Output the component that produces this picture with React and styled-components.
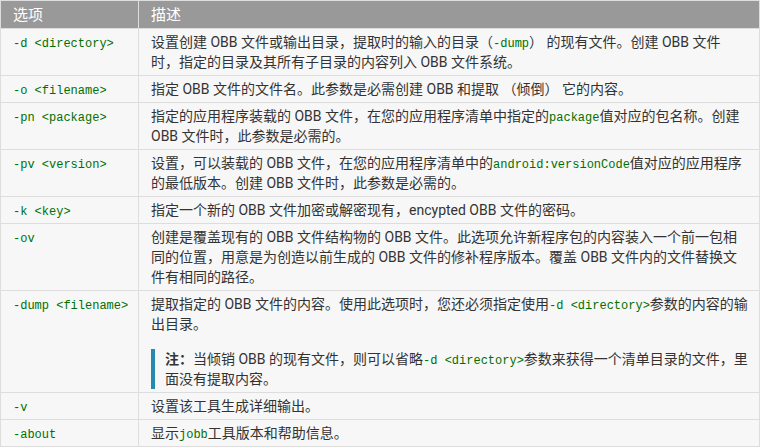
import React from 'react';
import styled, { createGlobalStyle } from 'styled-components';

const GlobalStyle = createGlobalStyle`
  html, body {
    margin: 0;
    padding: 0;
    background: #fff;
  }
  body {
    font-family: Roboto, "Noto Sans CJK SC", sans-serif;
  }
`;

const Table = styled.table`
  width: 760px;
  border-collapse: collapse;
  table-layout: fixed;
  font-size: 14px;
  color: #333;
`;

const HeadCell = styled.th`
  box-sizing: border-box;
  background: #999;
  color: #fff;
  font-weight: normal;
  font-size: 15px;
  text-align: left;
  line-height: 20px;
  padding: 4px 12px 3px;
  border: 1px solid #ddd;
  width: ${(p) => p.width || 'auto'};
`;

const Cell = styled.td`
  background: #f7f7f7;
  vertical-align: top;
  line-height: 20px;
  padding: 3px 12px 3px;
  border: 1px solid #ddd;
  white-space: nowrap;
`;

const Code = styled.code`
  font-family: "Liberation Mono", monospace;
  font-size: 12px;
  line-height: 1;
  color: #007000;
`;

const Note = styled.div`
  margin-top: 15px;
  border-left: 4px solid #258aaf;
  padding-left: 10px;
  line-height: 20px;
`;

const NoteLabel = styled.strong`
  font-weight: bold;
`;

const rows = [
  {
    opt: '-d <directory>',
    desc: (
      <>
        设置创建 OBB 文件或输出目录，提取时的输入的目录（<Code>-dump</Code>） 的现有文件。创建 OBB 文件
        <br />
        时，指定的目录及其所有子目录的内容列入 OBB 文件系统。
      </>
    ),
  },
  { opt: '-o <filename>', desc: '指定 OBB 文件的文件名。此参数是必需创建 OBB 和提取 （倾倒） 它的内容。' },
  {
    opt: '-pn <package>',
    desc: (
      <>
        指定的应用程序装载的 OBB 文件，在您的应用程序清单中指定的<Code>package</Code>值对应的包名称。创建
        <br />
        OBB 文件时，此参数是必需的。
      </>
    ),
  },
  {
    opt: '-pv <version>',
    desc: (
      <>
        设置，可以装载的 OBB 文件，在您的应用程序清单中的<Code>android:versionCode</Code>值对应的应用程序
        <br />
        的最低版本。创建 OBB 文件时，此参数是必需的。
      </>
    ),
  },
  { opt: '-k <key>', desc: '指定一个新的 OBB 文件加密或解密现有，encypted OBB 文件的密码。' },
  {
    opt: '-ov',
    desc: (
      <>
        创建是覆盖现有的 OBB 文件结构物的 OBB 文件。此选项允许新程序包的内容装入一个前一包相
        <br />
        同的位置，用意是为创造以前生成的 OBB 文件的修补程序版本。覆盖 OBB 文件内的文件替换文
        <br />
        件有相同的路径。
      </>
    ),
  },
  {
    opt: '-dump <filename>',
    desc: (
      <>
        提取指定的 OBB 文件的内容。使用此选项时，您还必须指定使用<Code>-d &lt;directory&gt;</Code>参数的内容的输
        <br />
        出目录。
        <Note>
          <NoteLabel>注：</NoteLabel>当倾销 OBB 的现有文件，则可以省略<Code>-d &lt;directory&gt;</Code>参数来获得一个清单目录的文件，里
          <br />
          面没有提取内容。
        </Note>
      </>
    ),
  },
  { opt: '-v', desc: '设置该工具生成详细输出。' },
  {
    opt: '-about',
    desc: (
      <>
        显示<Code>jobb</Code>工具版本和帮助信息。
      </>
    ),
  },
];

const App = () => {
  return (
    <>
      <GlobalStyle />
      <Table>
        <thead>
          <tr>
            <HeadCell width="138px">选项</HeadCell>
            <HeadCell>描述</HeadCell>
          </tr>
        </thead>
        <tbody>
          {rows.map((r) => (
            <tr key={r.opt}>
              <Cell>
                <Code>{r.opt}</Code>
              </Cell>
              <Cell>{r.desc}</Cell>
            </tr>
          ))}
        </tbody>
      </Table>
    </>
  );
};

export default App;
